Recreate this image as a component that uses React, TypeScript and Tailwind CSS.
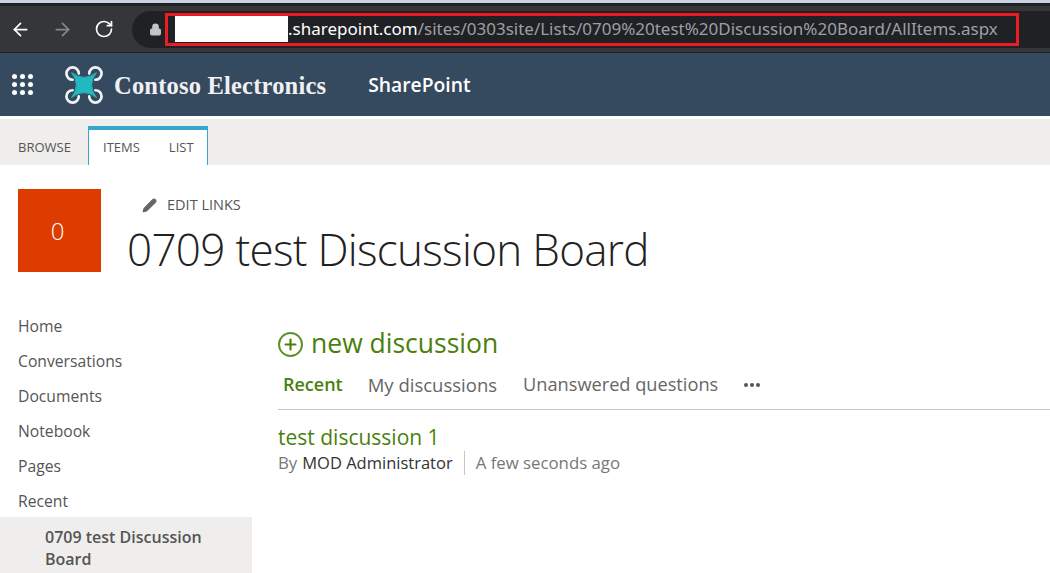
import React from 'react';
import { ArrowLeft, ArrowRight, RotateCw, Lock, Pencil, Plus } from 'lucide-react';

const font = "font-['Open_Sans',sans-serif]";

const navItems = ['Home', 'Conversations', 'Documents', 'Notebook', 'Pages', 'Recent'];

const DroneLogo = () => (
  <svg width="38" height="38" viewBox="0 0 40 40" fill="none">
    <g stroke="#f2f5f6" strokeWidth="2.8" strokeLinecap="round">
      <path d="M14.5 8 A6.5 6.5 0 1 0 8 14.5" />
      <path d="M32 14.5 A6.5 6.5 0 1 0 25.5 8" />
      <path d="M8 25.5 A6.5 6.5 0 1 0 14.5 32" />
      <path d="M25.5 32 A6.5 6.5 0 1 0 32 25.5" />
    </g>
    <path d="M7 7 Q20 17 33 7 Q23 20 33 33 Q20 23 7 33 Q17 20 7 7 Z" fill="#23b8c0" stroke="#23b8c0" strokeWidth="1" strokeLinejoin="round" />
  </svg>
);

const AppGrid = () => (
  <div className="grid grid-cols-3 gap-[3.5px] w-[21px]">
    {Array.from({ length: 9 }).map((_, i) => (
      <span key={i} className="w-[4.5px] h-[4.5px] rounded-full bg-white" />
    ))}
  </div>
);

const App: React.FC = () => {
  return (
    <div className={`w-[1050px] h-[573px] overflow-hidden bg-white flex flex-col ${font}`}>
      {/* browser chrome */}
      <div className="h-[3px] bg-[#c9d2e3]" />
      <div className="h-[3px] bg-[#202124]" />
      <div className="h-[47px] bg-[#35363a] flex items-center border-b border-[#202124]">
        <ArrowLeft size={21} className="text-white ml-[10px]" strokeWidth={2} />
        <ArrowRight size={21} className="text-[#86878a] ml-[21px]" strokeWidth={2} />
        <RotateCw size={20} className="text-white ml-[21px]" strokeWidth={2} />
        <div className="ml-[18px] flex-1 h-[37px] bg-[#202124] rounded-l-full flex items-center pl-[17px]">
          <Lock size={13} className="text-[#c4c5c7] fill-[#c4c5c7]" />
          <div className="ml-[3px] w-[854px] h-[33px] border-[3px] border-[#ed1c24] flex items-center pl-[7px] font-['Noto_Sans',sans-serif] text-[17px] whitespace-nowrap">
            <span className="w-[113px] h-[26px] bg-white" />
            <span className="text-white">.sharepoint.com</span>
            <span className="text-[#9aa0a6]">/sites/0303site/Lists/0709%20test%20Discussion%20Board/AllItems.aspx</span>
          </div>
        </div>
      </div>

      {/* suite bar */}
      <div className="h-[63px] bg-[#354a5f] flex items-center">
        <div className="ml-[12px]"><AppGrid /></div>
        <div className="ml-[32px]"><DroneLogo /></div>
        <span className="ml-[11px] mt-[3px] font-['Liberation_Serif',serif] font-bold text-[24.5px] text-[#f0f1f2] tracking-[0.2px]">Contoso Electronics</span>
        <span className="ml-[42px] mt-[2px] text-white text-[19.3px] font-semibold">SharePoint</span>
      </div>
      <div className="h-[3px] bg-white" />

      {/* ribbon */}
      <div className="h-[46px] bg-[#efeeec] flex items-end text-[13px] text-[#555]">
        <span className="w-[88px] pl-[18px] h-[39px] leading-[42px]">BROWSE</span>
        <div className="w-[120px] h-[39px] bg-white border-x border-[#38a5cd] border-t-4 border-t-[#38a5cd] flex items-center pl-[14px] gap-[29px]">
          <span>ITEMS</span>
          <span>LIST</span>
        </div>
      </div>

      {/* page title */}
      <div className="flex pt-[24px] pl-[18px]">
        <div className="w-[83px] h-[83px] bg-[#dc3c00] text-white text-[24px] font-light flex items-center justify-center pr-[4px]">0</div>
        <div className="ml-[27px]">
          <div className="flex items-center h-[32px] pl-[14px] text-[14.5px] text-[#555]">
            <Pencil size={15} className="text-[#666] fill-[#666]" />
            <span className="ml-[10px]">EDIT LINKS</span>
          </div>
          <h1 className="text-[44px] font-light leading-[56px] tracking-[-0.7px] text-[#222] whitespace-nowrap -ml-[1px]">0709 test Discussion Board</h1>
        </div>
      </div>

      {/* body */}
      <div className="flex flex-1 mt-[30px] min-h-0">
        <nav className="w-[252px] shrink-0 text-[15.7px] text-[#555]">
          {navItems.map((item) => (
            <div key={item} className="h-[35px] pl-[18px] leading-[39px]">{item}</div>
          ))}
          <div className="bg-[#efeeec] pl-[45px] pr-[30px] pt-[9px] h-[70px] text-[16px] leading-[22px] font-semibold text-[#555]">
            0709 test Discussion Board
          </div>
        </nav>
        <main className="flex-1 pl-[26px] pt-[16px]">
          <div className="flex items-center h-[40px] text-[#4b7f0d]">
            <span className="w-[25px] h-[25px] mt-[3px] rounded-full border-2 border-[#5f8f2c] flex items-center justify-center">
              <Plus size={17} strokeWidth={3} />
            </span>
            <span className="ml-[8px] mt-[2px] text-[26.5px]">new discussion</span>
          </div>
          <div className="flex items-center h-[47px] pb-[3px] border-b border-[#c6c6c6] text-[18.2px] text-[#666] pl-[5px]">
            <span className="text-[#4b7f0d] font-semibold text-[18px]">Recent</span>
            <span className="ml-[25px] text-[18.5px]">My discussions</span>
            <span className="ml-[26px]">Unanswered questions</span>
            <span className="ml-[26px] flex gap-[2px]">
              <i className="w-[4px] h-[4px] rounded-full bg-[#555]" />
              <i className="w-[4px] h-[4px] rounded-full bg-[#555]" />
              <i className="w-[4px] h-[4px] rounded-full bg-[#555]" />
            </span>
          </div>
          <div className="mt-[12px] text-[21px] leading-[30px] text-[#4b7f0d]">test discussion 1</div>
          <div className="flex items-center h-[22px] text-[16.8px] text-[#777]">
            <span>By</span>
            <span className="ml-[5px] text-[#333] text-[16.5px]">MOD Administrator</span>
            <span className="mx-[11px] h-[24px] w-px bg-[#c6c6c6]" />
            <span>A few seconds ago</span>
          </div>
        </main>
      </div>
    </div>
  );
};

export default App;
